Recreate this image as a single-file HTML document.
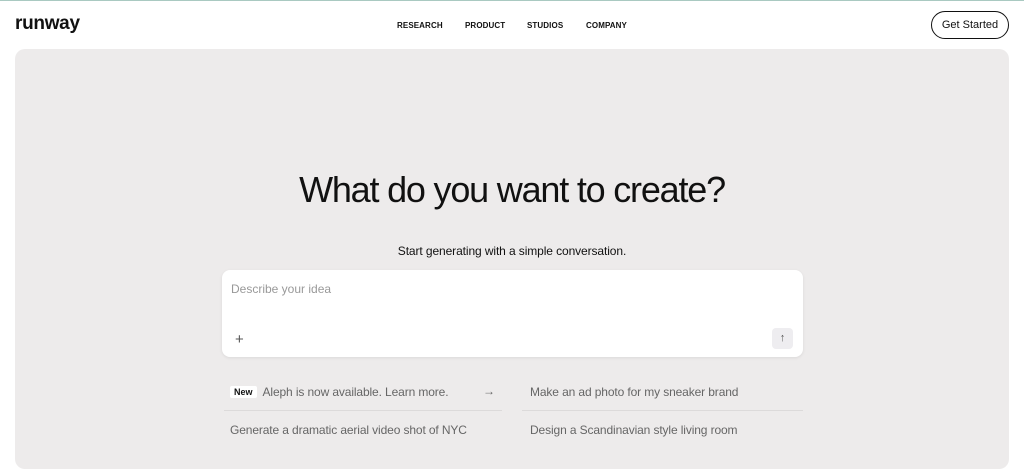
<!DOCTYPE html>
<html><head><style>
*{margin:0;padding:0;box-sizing:border-box}
body{width:1024px;height:455px;overflow:hidden;background:#fff;font-family:"Liberation Sans",sans-serif;color:#111;position:relative}
.top{position:absolute;top:0;left:0;right:0;height:1px;background:#a9c9c1}
.logo{position:absolute;left:15px;top:13px;font-size:19px;font-weight:bold;letter-spacing:-0.3px}
.nav{position:absolute;top:21px;font-size:8px;font-weight:bold;letter-spacing:0.1px}
.btn{position:absolute;left:931px;top:11px;width:78px;height:28px;border:1px solid #111;border-radius:14px;font-size:11px;text-align:center;line-height:26px}
.panel{position:absolute;left:15px;top:49px;width:994px;height:420px;background:#edebeb;border-radius:10px}
h1{position:absolute;left:0;width:1024px;top:169px;text-align:center;font-weight:normal;font-size:36px;letter-spacing:-1.2px}
.sub{position:absolute;left:0;width:1024px;top:244px;text-align:center;font-size:12px;letter-spacing:-0.1px}
.box{position:absolute;left:222px;top:270px;width:581px;height:87px;background:#fff;border-radius:8px;box-shadow:0 1px 3px rgba(0,0,0,.08)}
.ph{position:absolute;left:9px;top:12px;font-size:12px;color:#999}
.plus{position:absolute;left:13px;top:61px;font-size:15px;color:#555}
.up{position:absolute;left:550px;top:58px;width:21px;height:21px;background:#eeedf0;border-radius:4px;text-align:center;line-height:21px;font-size:11px;color:#555}
.s{position:absolute;font-size:12px;color:#666;letter-spacing:-0.12px}
.line{position:absolute;height:1px;background:#dcdada}
.new{display:inline-block;background:#fff;color:#111;font-size:9px;font-weight:bold;padding:1px 4px;border-radius:2px;margin-right:6px;vertical-align:1px;letter-spacing:0}
</style></head><body>
<div class="top"></div>
<div class="logo">runway</div>
<div class="nav" style="left:397px">RESEARCH</div>
<div class="nav" style="left:465px">PRODUCT</div>
<div class="nav" style="left:527px">STUDIOS</div>
<div class="nav" style="left:586px">COMPANY</div>
<div class="btn">Get Started</div>
<div class="panel"></div>
<h1>What do you want to create?</h1>
<div class="sub">Start generating with a simple conversation.</div>
<div class="box"><div class="ph">Describe your idea</div><div class="plus">+</div><div class="up">↑</div></div>
<div class="s" style="left:230px;top:385px"><span class="new">New</span>Aleph is now available. Learn more.</div>
<div class="s" style="left:483px;top:384px">→</div>
<div class="s" style="left:530px;top:385px">Make an ad photo for my sneaker brand</div>
<div class="line" style="left:224px;top:410px;width:278px"></div>
<div class="line" style="left:522px;top:410px;width:281px"></div>
<div class="s" style="left:230px;top:423px">Generate a dramatic aerial video shot of NYC</div>
<div class="s" style="left:530px;top:423px">Design a Scandinavian style living room</div>
</body></html>
